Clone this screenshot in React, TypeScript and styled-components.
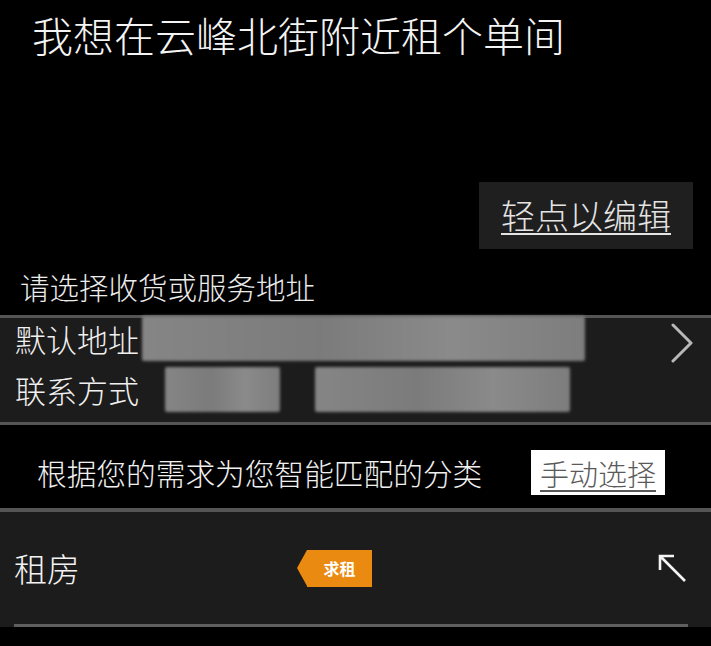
import React from 'react';
import styled, { createGlobalStyle } from 'styled-components';

const GlobalStyle = createGlobalStyle`
  html, body {
    margin: 0;
    padding: 0;
    background: #000;
  }
  body {
    font-family: "Noto Sans CJK SC", "Noto Sans", sans-serif;
    font-weight: 300;
    color: #f2f2f2;
  }
`;

const Page = styled.div`
  width: 711px;
  min-height: 646px;
  background: #000;
  overflow: hidden;
`;

const Title = styled.h1`
  margin: 0;
  padding: 7px 0 0 32px;
  font-size: 41px;
  font-weight: 300;
  line-height: 54px;
  color: #f4f4f4;
`;

const EditRow = styled.div`
  display: flex;
  justify-content: flex-end;
  padding: 121px 18px 0 0;
`;

const EditButton = styled.button`
  width: 214px;
  height: 67px;
  border: none;
  background: #1f1f1f;
  color: #e4e4e4;
  font-family: inherit;
  font-weight: 300;
  font-size: 34px;
  padding: 0 0 2px;
  text-decoration: underline;
  text-underline-offset: 4px;
  text-decoration-thickness: 2px;
  cursor: pointer;
`;

const SectionLabel = styled.div`
  padding: 19px 0 0 20px;
  height: 47px;
  font-size: 29.5px;
  line-height: 36px;
  color: #ececec;
`;

const AddressPanel = styled.div`
  display: flex;
  align-items: flex-start;
  background: #1c1c1c;
  border-top: 3px solid #555;
  border-bottom: 3px solid #555;
  height: 104px;
`;

const AddressRows = styled.div`
  flex: 1;
  display: flex;
  flex-direction: column;
  gap: 4px;
  margin-top: -3px;
`;

const AddressRow = styled.div`
  display: flex;
  align-items: center;
  height: 47px;
  padding-left: 15px;
  font-size: 31px;
  color: #f0f0f0;
`;

const RowLabel = styled.span`
  width: 127px;
  flex: none;
`;

const Redacted = styled.span<{ $w: number; $ml?: number }>`
  display: inline-block;
  width: ${p => p.$w}px;
  height: 45px;
  margin-left: ${p => p.$ml ?? 0}px;
  background: linear-gradient(90deg, #858585, #7b7b7b 40%, #8a8a8a 70%, #7d7d7d);
  filter: blur(1.5px);
  border-radius: 2px;
`;

const Chevron = styled.svg`
  flex: none;
  margin: 5px 17px 0 0;
`;

const MatchRow = styled.div`
  display: flex;
  align-items: center;
  justify-content: space-between;
  box-sizing: border-box;
  height: 87px;
  padding: 12px 46px 0 37px;
  border-bottom: 4px solid #555;
`;

const MatchText = styled.span`
  font-size: 29.7px;
  color: #f0f0f0;
`;

const ManualButton = styled.button`
  height: 45px;
  width: 134px;
  border: none;
  background: #fff;
  color: #5a5a5a;
  font-family: inherit;
  font-weight: 300;
  font-size: 29px;
  padding: 0;
  text-decoration: underline;
  text-underline-offset: 4px;
  cursor: pointer;
`;

const CategoryPanel = styled.div`
  background: #1c1c1c;
  padding: 0 23px 0 14px;
`;

const CategoryRow = styled.div`
  display: flex;
  align-items: center;
  height: 112px;
  border-bottom: 3px solid #5e5e5e;
`;

const CategoryName = styled.span`
  width: 283px;
  font-size: 33px;
  color: #f2f2f2;
`;

const Tag = styled.span`
  position: relative;
  display: inline-flex;
  align-items: center;
  justify-content: center;
  height: 37px;
  width: 65px;
  margin-left: 10px;
  background: #ea8a10;
  color: #fff;
  font-size: 16px;
  font-weight: 700;
  &::before {
    content: '';
    position: absolute;
    left: -10px;
    top: 0;
    border-top: 18.5px solid transparent;
    border-bottom: 18.5px solid transparent;
    border-right: 10px solid #ea8a10;
  }
`;

const Spacer = styled.div`
  flex: 1;
`;

const Arrow = styled.svg`
  flex: none;
  margin: 2px 0 0 0;
`;

export default function App() {
  return (
    <Page>
      <GlobalStyle />
      <Title>我想在云峰北街附近租个单间</Title>
      <EditRow>
        <EditButton>轻点以编辑</EditButton>
      </EditRow>
      <SectionLabel>请选择收货或服务地址</SectionLabel>
      <AddressPanel>
        <AddressRows>
          <AddressRow>
            <RowLabel>默认地址</RowLabel>
            <Redacted $w={443} />
          </AddressRow>
          <AddressRow>
            <RowLabel>联系方式</RowLabel>
            <Redacted $w={115} $ml={23} />
            <Redacted $w={255} $ml={35} />
          </AddressRow>
        </AddressRows>
        <Chevron width="24" height="40" viewBox="0 0 24 40">
          <polyline points="3,2 21,20 3,38" fill="none" stroke="#b8b8b8" strokeWidth="3" strokeLinecap="round" strokeLinejoin="round" />
        </Chevron>
      </AddressPanel>
      <MatchRow>
        <MatchText>根据您的需求为您智能匹配的分类</MatchText>
        <ManualButton>手动选择</ManualButton>
      </MatchRow>
      <CategoryPanel>
        <CategoryRow>
          <CategoryName>租房</CategoryName>
          <Tag>求租</Tag>
          <Spacer />
          <Arrow width="30" height="30" viewBox="0 0 30 30">
            <path d="M2 16 V2 H16 M2 2 L27 27" fill="none" stroke="#f4f4f4" strokeWidth="2.6" />
          </Arrow>
        </CategoryRow>
      </CategoryPanel>
    </Page>
  );
}
